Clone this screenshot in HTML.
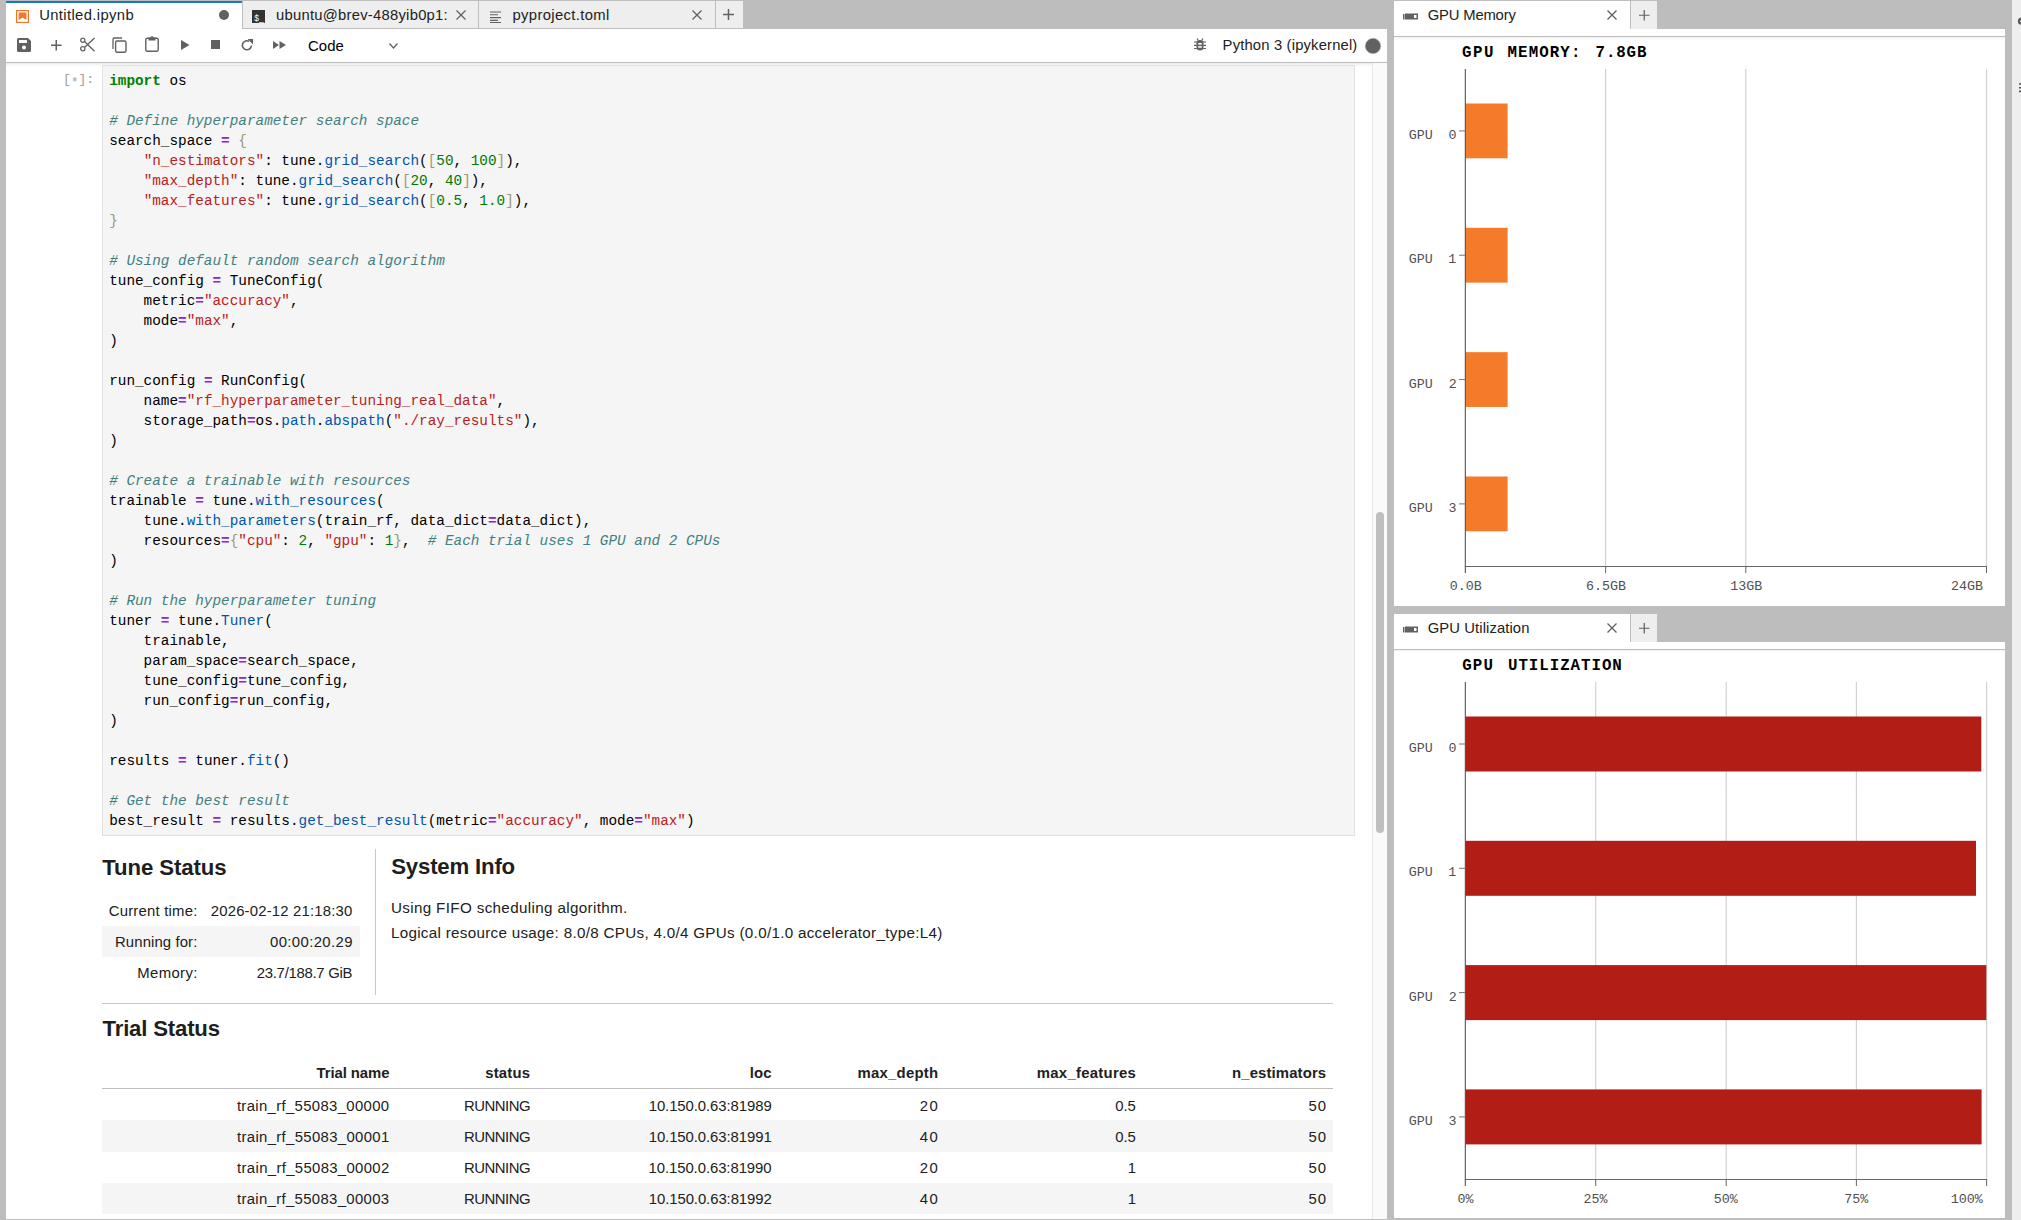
<!DOCTYPE html><html><head><meta charset="utf-8"><style>
*{margin:0;padding:0;box-sizing:border-box}
html,body{width:2021px;height:1220px;overflow:hidden;background:#bdbdbd;font-family:"Liberation Sans",sans-serif;color:#212121}
.a{position:absolute}
.t{position:absolute;white-space:pre;line-height:1}
.code{position:absolute;font-family:"Liberation Mono",monospace;font-size:14.35px;line-height:20px;white-space:pre;color:#000}
.kw{color:#008000;font-weight:bold}
.cm{color:#408080;font-style:italic}
.st{color:#ba2121}
.op{color:#8a22e0;font-weight:bold}
.br{color:#999977}
.nu{color:#007a00}
.pr{color:#0055aa}
svg{position:absolute;overflow:visible}
</style></head><body><div class="a" style="left:6px;top:29px;width:1381px;height:1190px;background:#fff;"></div><div class="a" style="left:6px;top:62px;width:1381px;height:1px;background:#bdbdbd;"></div><div class="a" style="left:6px;top:63px;width:1366px;height:4px;background:linear-gradient(rgba(0,0,0,0.07),rgba(0,0,0,0));"></div><div class="a" style="left:6px;top:1px;width:236px;height:28px;background:#fff;"></div><div class="a" style="left:6px;top:1px;width:236px;height:2px;background:#1976d2;"></div><svg style="left:16px;top:10px" width="13" height="13" viewBox="0 0 13 13"><rect x="0.6" y="0.6" width="11.8" height="11.8" fill="#fff" stroke="#f37726" stroke-width="1.2"/><path d="M2.6 2.6h7.8v7.4l-3.9-2.6-3.9 2.6z" fill="#f37726"/></svg><div class="t" style="left:39.19px;top:7.77px;font-family:'Liberation Sans',sans-serif;font-size:14.80px;color:#212121;letter-spacing:0.370px;">Untitled.ipynb</div><svg style="left:219px;top:9.6px" width="10" height="10"><circle cx="5" cy="5" r="5" fill="#616161"/></svg><div class="a" style="left:242px;top:1px;width:237px;height:28px;background:#eeeeee;border-left:1px solid #bdbdbd;border-bottom:1px solid #bdbdbd"></div><svg style="left:252px;top:10px" width="13" height="13" viewBox="0 0 13 13"><rect width="13" height="13" fill="#333"/><text x="2.2" y="10.5" font-family="Liberation Sans" font-size="8.5" fill="#fff">$_</text></svg><div class="t" style="left:275.94px;top:7.97px;font-family:'Liberation Sans',sans-serif;font-size:14.80px;color:#212121;letter-spacing:0.256px;">ubuntu@brev-488yib0p1:</div><svg style="left:456.0px;top:9.8px" width="10" height="10" viewBox="0 0 10 10"><path d="M0.5 0.5L9.5 9.5M9.5 0.5L0.5 9.5" stroke="#616161" stroke-width="1.3" fill="none"/></svg><div class="a" style="left:478px;top:1px;width:237px;height:28px;background:#eeeeee;border-left:1px solid #bdbdbd;border-bottom:1px solid #bdbdbd"></div><svg style="left:489px;top:10px" width="13" height="13" viewBox="0 0 13 13"><path d="M1 2h11M1 4.8h8M1 7.6h11M1 10.4h8M1 12.5h11" stroke="#616161" stroke-width="1.1"/></svg><div class="t" style="left:512.54px;top:7.97px;font-family:'Liberation Sans',sans-serif;font-size:14.80px;color:#212121;letter-spacing:0.353px;">pyproject.toml</div><svg style="left:692.0px;top:9.8px" width="10" height="10" viewBox="0 0 10 10"><path d="M0.5 0.5L9.5 9.5M9.5 0.5L0.5 9.5" stroke="#616161" stroke-width="1.3" fill="none"/></svg><div class="a" style="left:715px;top:1px;width:28px;height:28px;background:#eeeeee;border-left:1px solid #bdbdbd;border-bottom:1px solid #bdbdbd"></div><svg style="left:723.4px;top:9.3px" width="11" height="11" viewBox="0 0 11 11"><path d="M5.5 0V11M0 5.5H11" stroke="#616161" stroke-width="1.5" fill="none"/></svg><svg style="left:17px;top:38px" width="14" height="14" viewBox="0 0 14 14"><path d="M1.5 0h9.5l3 3v9.5a1.5 1.5 0 0 1-1.5 1.5h-11A1.5 1.5 0 0 1 0 12.5v-11A1.5 1.5 0 0 1 1.5 0z" fill="#616161"/><rect x="2" y="2" width="8" height="3" fill="#fff"/><circle cx="7" cy="9.5" r="2" fill="#fff"/></svg><svg style="left:50.5px;top:39.6px" width="10.5" height="10.5" viewBox="0 0 11 11"><path d="M5.5 0V11M0 5.5H11" stroke="#616161" stroke-width="1.6" fill="none"/></svg><svg style="left:80px;top:37px" width="15" height="15" viewBox="0 0 15 15"><circle cx="2.8" cy="3.2" r="2.1" fill="none" stroke="#616161" stroke-width="1.3"/><circle cx="2.8" cy="11.8" r="2.1" fill="none" stroke="#616161" stroke-width="1.3"/><path d="M4.5 4.5L14.5 14.2M4.5 10.5L14.5 1" stroke="#616161" stroke-width="1.3"/></svg><svg style="left:112px;top:37px" width="15" height="16" viewBox="0 0 15 16"><path d="M1 12V2.2A1.2 1.2 0 0 1 2.2 1H10" fill="none" stroke="#616161" stroke-width="1.3"/><rect x="3.6" y="4" width="10.4" height="11.2" rx="1.4" fill="none" stroke="#616161" stroke-width="1.4"/></svg><svg style="left:145px;top:36px" width="14" height="16" viewBox="0 0 14 16"><rect x="0.8" y="2.2" width="12.4" height="13" rx="1.4" fill="none" stroke="#616161" stroke-width="1.4"/><path d="M3.5 1.5h7v3h-7z" fill="#616161"/><circle cx="7" cy="1.5" r="1.3" fill="#616161"/></svg><svg style="left:181px;top:40px" width="9" height="10" viewBox="0 0 9 10"><path d="M0 0L8.5 5L0 10z" fill="#616161"/></svg><div class="a" style="left:211px;top:40px;width:9px;height:9px;background:#616161;"></div><svg style="left:241px;top:39px" width="12" height="12" viewBox="0 0 12 12"><path d="M10.4 6.4A4.5 4.5 0 1 1 8.2 2.4" fill="none" stroke="#616161" stroke-width="1.6"/><path d="M6.6 0L12 0L12 5.4z" fill="#616161"/></svg><svg style="left:272.5px;top:41px" width="13" height="8" viewBox="0 0 13 8"><path d="M0 0L6 4L0 8zM6.5 0L13 4L6.5 8z" fill="#616161"/></svg><div class="t" style="left:308.06px;top:38.59px;font-family:'Liberation Sans',sans-serif;font-size:14.90px;color:#000;letter-spacing:0.068px;">Code</div><svg style="left:389px;top:42.5px" width="9" height="6" viewBox="0 0 9 6"><path d="M0.5 0.5L4.5 5L8.5 0.5" fill="none" stroke="#616161" stroke-width="1.3"/></svg><svg style="left:1194px;top:38px" width="12" height="13" viewBox="0 0 12 13"><path d="M3 0.5L4.2 2.5M9 0.5L7.8 2.5" stroke="#616161" stroke-width="1.3"/><path d="M2.5 4.5a3.5 2.5 0 0 1 7 0V9a3.5 3.5 0 0 1-7 0z" fill="#616161"/><path d="M0 4h12M0 7.3h12M0 10.5h12" stroke="#616161" stroke-width="1.2"/><rect x="4.2" y="5" width="3.6" height="1.6" fill="#fff"/><rect x="4.2" y="8.1" width="3.6" height="1.6" fill="#fff"/></svg><div class="t" style="left:1222.62px;top:38.37px;font-family:'Liberation Sans',sans-serif;font-size:14.80px;color:#212121;letter-spacing:0.163px;">Python 3 (ipykernel)</div><svg style="left:1365px;top:37.8px" width="16" height="16"><circle cx="8" cy="8" r="7.6" fill="#616161" stroke="#888" stroke-width="0.8" stroke-dasharray="1.2 0.8"/></svg><div class="a" style="left:102px;top:65px;width:1253px;height:771px;background:#f5f5f5;border:1px solid #e0e0e0"></div><div class="t" style="left:62.90px;top:73.44px;font-family:'Liberation Mono',monospace;font-size:13px;color:#9e9e9e">[<span style="position:relative;top:2.6px">*</span>]:</div><div class="code" style="left:109.2px;top:70.5px"><span class="kw">import</span> os

<span class="cm"># Define hyperparameter search space</span>
search_space <span class="op">=</span> <span class="br">{</span>
    <span class="st">&quot;n_estimators&quot;</span>: tune.<span class="pr">grid_search</span>(<span class="br">[</span><span class="nu">50</span>, <span class="nu">100</span><span class="br">]</span>),
    <span class="st">&quot;max_depth&quot;</span>: tune.<span class="pr">grid_search</span>(<span class="br">[</span><span class="nu">20</span>, <span class="nu">40</span><span class="br">]</span>),
    <span class="st">&quot;max_features&quot;</span>: tune.<span class="pr">grid_search</span>(<span class="br">[</span><span class="nu">0.5</span>, <span class="nu">1.0</span><span class="br">]</span>),
<span class="br">}</span>

<span class="cm"># Using default random search algorithm</span>
tune_config <span class="op">=</span> TuneConfig(
    metric<span class="op">=</span><span class="st">&quot;accuracy&quot;</span>,
    mode<span class="op">=</span><span class="st">&quot;max&quot;</span>,
)

run_config <span class="op">=</span> RunConfig(
    name<span class="op">=</span><span class="st">&quot;rf_hyperparameter_tuning_real_data&quot;</span>,
    storage_path<span class="op">=</span>os.<span class="pr">path</span>.<span class="pr">abspath</span>(<span class="st">&quot;./ray_results&quot;</span>),
)

<span class="cm"># Create a trainable with resources</span>
trainable <span class="op">=</span> tune.<span class="pr">with_resources</span>(
    tune.<span class="pr">with_parameters</span>(train_rf, data_dict<span class="op">=</span>data_dict),
    resources<span class="op">=</span><span class="br">{</span><span class="st">&quot;cpu&quot;</span>: <span class="nu">2</span>, <span class="st">&quot;gpu&quot;</span>: <span class="nu">1</span><span class="br">}</span>,  <span class="cm"># Each trial uses 1 GPU and 2 CPUs</span>
)

<span class="cm"># Run the hyperparameter tuning</span>
tuner <span class="op">=</span> tune.<span class="pr">Tuner</span>(
    trainable,
    param_space<span class="op">=</span>search_space,
    tune_config<span class="op">=</span>tune_config,
    run_config<span class="op">=</span>run_config,
)

results <span class="op">=</span> tuner.<span class="pr">fit</span>()

<span class="cm"># Get the best result</span>
best_result <span class="op">=</span> results.<span class="pr">get_best_result</span>(metric<span class="op">=</span><span class="st">&quot;accuracy&quot;</span>, mode<span class="op">=</span><span class="st">&quot;max&quot;</span>)</div><div class="a" style="left:1372px;top:63px;width:15px;height:1156px;background:#fafafa;border-left:1px solid #e8e8e8"></div><div class="a" style="left:1376px;top:512px;width:8px;height:321px;background:#bfbfbf;border-radius:4px"></div><div class="t" style="left:102.18px;top:856.61px;font-family:'Liberation Sans',sans-serif;font-size:22.20px;color:#1e1e1e;font-weight:700;letter-spacing:-0.082px;">Tune Status</div><div class="a" style="left:375px;top:849px;width:1px;height:146px;background:#c8c8c8;"></div><div class="a" style="left:102px;top:926px;width:258px;height:31px;background:#f5f5f5;"></div><div class="t" style="left:108.66px;top:904.39px;font-family:'Liberation Sans',sans-serif;font-size:14.90px;color:#212121;letter-spacing:0.220px;">Current time:</div><div class="t" style="left:210.75px;top:904.39px;font-family:'Liberation Sans',sans-serif;font-size:14.90px;color:#212121;letter-spacing:0.179px;">2026-02-12 21:18:30</div><div class="t" style="left:115.01px;top:935.09px;font-family:'Liberation Sans',sans-serif;font-size:14.90px;color:#212121;letter-spacing:0.109px;">Running for:</div><div class="t" style="left:270.00px;top:935.09px;font-family:'Liberation Sans',sans-serif;font-size:14.90px;color:#212121;letter-spacing:0.379px;">00:00:20.29</div><div class="t" style="left:137.31px;top:965.99px;font-family:'Liberation Sans',sans-serif;font-size:14.90px;color:#212121;letter-spacing:0.358px;">Memory:</div><div class="t" style="left:256.75px;top:965.99px;font-family:'Liberation Sans',sans-serif;font-size:14.90px;color:#212121;letter-spacing:-0.276px;">23.7/188.7 GiB</div><div class="t" style="left:391.23px;top:856.21px;font-family:'Liberation Sans',sans-serif;font-size:22.20px;color:#1e1e1e;font-weight:700;letter-spacing:-0.181px;">System Info</div><div class="t" style="left:390.96px;top:900.43px;font-family:'Liberation Sans',sans-serif;font-size:15.20px;color:#212121;letter-spacing:0.352px;">Using FIFO scheduling algorithm.</div><div class="t" style="left:390.88px;top:924.63px;font-family:'Liberation Sans',sans-serif;font-size:15.20px;color:#212121;letter-spacing:0.305px;">Logical resource usage: 8.0/8 CPUs, 4.0/4 GPUs (0.0/1.0 accelerator_type:L4)</div><div class="a" style="left:102px;top:1003px;width:1231px;height:1px;background:#c8c8c8;"></div><div class="t" style="left:102.58px;top:1018.01px;font-family:'Liberation Sans',sans-serif;font-size:22.20px;color:#1e1e1e;font-weight:700;letter-spacing:-0.195px;">Trial Status</div><div class="t" style="left:316.45px;top:1065.59px;font-family:'Liberation Sans',sans-serif;font-size:14.90px;color:#212121;font-weight:700;letter-spacing:-0.065px;">Trial name</div><div class="t" style="left:485.18px;top:1065.59px;font-family:'Liberation Sans',sans-serif;font-size:14.90px;color:#212121;font-weight:700;letter-spacing:0.207px;">status</div><div class="t" style="left:749.76px;top:1065.59px;font-family:'Liberation Sans',sans-serif;font-size:14.90px;color:#212121;font-weight:700;letter-spacing:0.130px;">loc</div><div class="t" style="left:857.53px;top:1065.59px;font-family:'Liberation Sans',sans-serif;font-size:14.90px;color:#212121;font-weight:700;letter-spacing:0.249px;">max_depth</div><div class="t" style="left:1036.73px;top:1065.59px;font-family:'Liberation Sans',sans-serif;font-size:14.90px;color:#212121;font-weight:700;letter-spacing:0.285px;">max_features</div><div class="t" style="left:1232.03px;top:1065.59px;font-family:'Liberation Sans',sans-serif;font-size:14.90px;color:#212121;font-weight:700;letter-spacing:0.128px;">n_estimators</div><div class="a" style="left:102px;top:1088px;width:1231px;height:1px;background:#bdbdbd;"></div><div class="a" style="left:102px;top:1120px;width:1231px;height:32px;background:#f5f5f5;"></div><div class="a" style="left:102px;top:1183px;width:1231px;height:31px;background:#f5f5f5;"></div><div class="t" style="left:236.88px;top:1098.69px;font-family:'Liberation Sans',sans-serif;font-size:14.90px;color:#212121;letter-spacing:0.339px;">train_rf_55083_00000</div><div class="t" style="left:463.91px;top:1098.69px;font-family:'Liberation Sans',sans-serif;font-size:14.90px;color:#212121;letter-spacing:-0.479px;">RUNNING</div><div class="t" style="left:648.68px;top:1098.69px;font-family:'Liberation Sans',sans-serif;font-size:14.90px;color:#212121;letter-spacing:-0.074px;">10.150.0.63:81989</div><div class="t" style="left:919.86px;top:1098.69px;font-family:'Liberation Sans',sans-serif;font-size:14.90px;color:#212121;letter-spacing:1.427px;">20</div><div class="t" style="left:1115.20px;top:1098.69px;font-family:'Liberation Sans',sans-serif;font-size:14.90px;color:#212121;letter-spacing:-0.010px;">0.5</div><div class="t" style="left:1308.40px;top:1098.69px;font-family:'Liberation Sans',sans-serif;font-size:14.90px;color:#212121;letter-spacing:1.178px;">50</div><div class="t" style="left:237.03px;top:1129.99px;font-family:'Liberation Sans',sans-serif;font-size:14.90px;color:#212121;letter-spacing:0.339px;">train_rf_55083_00001</div><div class="t" style="left:463.91px;top:1129.99px;font-family:'Liberation Sans',sans-serif;font-size:14.90px;color:#212121;letter-spacing:-0.479px;">RUNNING</div><div class="t" style="left:648.68px;top:1129.99px;font-family:'Liberation Sans',sans-serif;font-size:14.90px;color:#212121;letter-spacing:-0.074px;">10.150.0.63:81991</div><div class="t" style="left:919.86px;top:1129.99px;font-family:'Liberation Sans',sans-serif;font-size:14.90px;color:#212121;letter-spacing:1.427px;">40</div><div class="t" style="left:1115.20px;top:1129.99px;font-family:'Liberation Sans',sans-serif;font-size:14.90px;color:#212121;letter-spacing:-0.010px;">0.5</div><div class="t" style="left:1308.40px;top:1129.99px;font-family:'Liberation Sans',sans-serif;font-size:14.90px;color:#212121;letter-spacing:1.178px;">50</div><div class="t" style="left:237.10px;top:1161.29px;font-family:'Liberation Sans',sans-serif;font-size:14.90px;color:#212121;letter-spacing:0.339px;">train_rf_55083_00002</div><div class="t" style="left:463.91px;top:1161.29px;font-family:'Liberation Sans',sans-serif;font-size:14.90px;color:#212121;letter-spacing:-0.479px;">RUNNING</div><div class="t" style="left:648.53px;top:1161.29px;font-family:'Liberation Sans',sans-serif;font-size:14.90px;color:#212121;letter-spacing:-0.074px;">10.150.0.63:81990</div><div class="t" style="left:919.86px;top:1161.29px;font-family:'Liberation Sans',sans-serif;font-size:14.90px;color:#212121;letter-spacing:1.427px;">20</div><div class="t" style="left:1127.70px;top:1161.29px;font-family:'Liberation Sans',sans-serif;font-size:14.90px;color:#212121;letter-spacing:-0.010px;">1</div><div class="t" style="left:1308.40px;top:1161.29px;font-family:'Liberation Sans',sans-serif;font-size:14.90px;color:#212121;letter-spacing:1.178px;">50</div><div class="t" style="left:236.95px;top:1192.39px;font-family:'Liberation Sans',sans-serif;font-size:14.90px;color:#212121;letter-spacing:0.339px;">train_rf_55083_00003</div><div class="t" style="left:463.91px;top:1192.39px;font-family:'Liberation Sans',sans-serif;font-size:14.90px;color:#212121;letter-spacing:-0.479px;">RUNNING</div><div class="t" style="left:648.76px;top:1192.39px;font-family:'Liberation Sans',sans-serif;font-size:14.90px;color:#212121;letter-spacing:-0.074px;">10.150.0.63:81992</div><div class="t" style="left:919.86px;top:1192.39px;font-family:'Liberation Sans',sans-serif;font-size:14.90px;color:#212121;letter-spacing:1.427px;">40</div><div class="t" style="left:1127.70px;top:1192.39px;font-family:'Liberation Sans',sans-serif;font-size:14.90px;color:#212121;letter-spacing:-0.010px;">1</div><div class="t" style="left:1308.40px;top:1192.39px;font-family:'Liberation Sans',sans-serif;font-size:14.90px;color:#212121;letter-spacing:1.178px;">50</div><div class="a" style="left:1394px;top:37px;width:611px;height:569px;background:#fff;"></div><div class="a" style="left:1394px;top:1px;width:236px;height:28px;background:#fff;"></div><div class="a" style="left:1630px;top:1px;width:27px;height:28px;background:#eeeeee;border-left:1px solid #bdbdbd"></div><div class="a" style="left:1394px;top:29px;width:611px;height:7px;background:#fff;"></div><div class="a" style="left:1394px;top:36px;width:611px;height:1px;background:#bdbdbd;"></div><div class="a" style="left:1394px;top:37px;width:611px;height:3px;background:linear-gradient(rgba(0,0,0,0.05),rgba(0,0,0,0));"></div><svg style="left:1403px;top:13.0px" width="15" height="7" viewBox="0 0 15 7"><rect x="0" y="1" width="1.5" height="5.5" fill="#616161"/><path d="M2 0.5h13v6h-13z" fill="#616161"/><rect x="11" y="2" width="2.5" height="3" fill="#fff"/></svg><div class="t" style="left:1427.76px;top:8.37px;font-family:'Liberation Sans',sans-serif;font-size:14.80px;color:#212121;letter-spacing:-0.175px;">GPU Memory</div><svg style="left:1606.8px;top:10.2px" width="10" height="10" viewBox="0 0 10 10"><path d="M0.5 0.5L9.5 9.5M9.5 0.5L0.5 9.5" stroke="#616161" stroke-width="1.3" fill="none"/></svg><svg style="left:1638.5px;top:9.9px" width="10.5" height="10.5" viewBox="0 0 11 11"><path d="M5.5 0V11M0 5.5H11" stroke="#616161" stroke-width="1.3" fill="none"/></svg><div class="a" style="left:1394px;top:650px;width:611px;height:568px;background:#fff;"></div><div class="a" style="left:1394px;top:614px;width:236px;height:28px;background:#fff;"></div><div class="a" style="left:1630px;top:614px;width:27px;height:28px;background:#eeeeee;border-left:1px solid #bdbdbd"></div><div class="a" style="left:1394px;top:642px;width:611px;height:7px;background:#fff;"></div><div class="a" style="left:1394px;top:649px;width:611px;height:1px;background:#bdbdbd;"></div><div class="a" style="left:1394px;top:650px;width:611px;height:3px;background:linear-gradient(rgba(0,0,0,0.05),rgba(0,0,0,0));"></div><svg style="left:1403px;top:626.0px" width="15" height="7" viewBox="0 0 15 7"><rect x="0" y="1" width="1.5" height="5.5" fill="#616161"/><path d="M2 0.5h13v6h-13z" fill="#616161"/><rect x="11" y="2" width="2.5" height="3" fill="#fff"/></svg><div class="t" style="left:1427.76px;top:621.37px;font-family:'Liberation Sans',sans-serif;font-size:14.80px;color:#212121;letter-spacing:0.097px;">GPU Utilization</div><svg style="left:1606.8px;top:623.2px" width="10" height="10" viewBox="0 0 10 10"><path d="M0.5 0.5L9.5 9.5M9.5 0.5L0.5 9.5" stroke="#616161" stroke-width="1.3" fill="none"/></svg><svg style="left:1638.5px;top:622.9px" width="10.5" height="10.5" viewBox="0 0 11 11"><path d="M5.5 0V11M0 5.5H11" stroke="#616161" stroke-width="1.3" fill="none"/></svg><div class="a" style="left:2012px;top:0px;width:9px;height:1220px;background:#eeeeee;"></div><svg style="left:2017px;top:16.5px" width="8" height="9"><circle cx="4.5" cy="4.2" r="3.6" fill="#5a5a5a"/><circle cx="4.5" cy="4.2" r="1.2" fill="#eee"/></svg><svg style="left:2019.3px;top:83px" width="3" height="10"><path d="M0 1h3M0 4.7h3M0 8.4h3" stroke="#555" stroke-width="1.6"/></svg><div class="t" style="left:1462.07px;top:45.90px;font-family:'Liberation Mono',monospace;font-size:15.80px;color:#000;font-weight:700;letter-spacing:1.520px;">GPU</div><div class="t" style="left:1507.51px;top:45.90px;font-family:'Liberation Mono',monospace;font-size:15.80px;color:#000;font-weight:700;letter-spacing:1.094px;">MEMORY:</div><div class="t" style="left:1595.57px;top:45.90px;font-family:'Liberation Mono',monospace;font-size:15.80px;color:#000;font-weight:700;letter-spacing:0.861px;">7.8GB</div><svg style="left:0;top:0" width="2021" height="1220"><rect x="1605.00" y="69.00" width="1.2" height="497.00" fill="#d2d2d2"/><rect x="1745.20" y="69.00" width="1.2" height="497.00" fill="#d2d2d2"/><rect x="1985.90" y="69.00" width="1.2" height="497.00" fill="#d2d2d2"/><rect x="1465.5" y="103.50" width="42.10" height="54.80" fill="#f47b2a"/><rect x="1465.5" y="227.83" width="42.10" height="54.80" fill="#f47b2a"/><rect x="1465.5" y="352.16" width="42.10" height="54.80" fill="#f47b2a"/><rect x="1465.5" y="476.49" width="42.10" height="54.80" fill="#f47b2a"/><rect x="1464.8" y="69.00" width="1" height="504.00" fill="#444"/><rect x="1464.8" y="566.00" width="522.20" height="1" fill="#666"/><rect x="1465.00" y="566.00" width="1" height="7" fill="#666"/><rect x="1605.10" y="566.00" width="1" height="7" fill="#666"/><rect x="1745.30" y="566.00" width="1" height="7" fill="#666"/><rect x="1986.00" y="566.00" width="1" height="7" fill="#666"/><rect x="1459" y="130.40" width="6" height="1" fill="#777"/><rect x="1459" y="254.73" width="6" height="1" fill="#777"/><rect x="1459" y="379.06" width="6" height="1" fill="#777"/><rect x="1459" y="503.39" width="6" height="1" fill="#777"/></svg><div class="t" style="left:1408.77px;top:128.89px;font-family:'Liberation Mono',monospace;font-size:13.33px;color:#505050;">GPU</div><div class="t" style="left:1448.50px;top:128.89px;font-family:'Liberation Mono',monospace;font-size:13.33px;color:#505050;">0</div><div class="t" style="left:1408.77px;top:253.22px;font-family:'Liberation Mono',monospace;font-size:13.33px;color:#505050;">GPU</div><div class="t" style="left:1448.30px;top:253.22px;font-family:'Liberation Mono',monospace;font-size:13.33px;color:#505050;">1</div><div class="t" style="left:1408.77px;top:377.55px;font-family:'Liberation Mono',monospace;font-size:13.33px;color:#505050;">GPU</div><div class="t" style="left:1448.64px;top:377.55px;font-family:'Liberation Mono',monospace;font-size:13.33px;color:#505050;">2</div><div class="t" style="left:1408.77px;top:501.88px;font-family:'Liberation Mono',monospace;font-size:13.33px;color:#505050;">GPU</div><div class="t" style="left:1448.57px;top:501.88px;font-family:'Liberation Mono',monospace;font-size:13.33px;color:#505050;">3</div><div class="t" style="left:1449.70px;top:579.99px;font-family:'Liberation Mono',monospace;font-size:13.33px;color:#505050;">0.0B</div><div class="t" style="left:1586.00px;top:579.99px;font-family:'Liberation Mono',monospace;font-size:13.33px;color:#505050;">6.5GB</div><div class="t" style="left:1730.20px;top:579.99px;font-family:'Liberation Mono',monospace;font-size:13.33px;color:#505050;">13GB</div><div class="t" style="left:1951.00px;top:579.99px;font-family:'Liberation Mono',monospace;font-size:13.33px;color:#505050;">24GB</div><div class="t" style="left:1462.27px;top:659.20px;font-family:'Liberation Mono',monospace;font-size:15.80px;color:#000;font-weight:700;letter-spacing:1.120px;">GPU</div><div class="t" style="left:1507.95px;top:659.20px;font-family:'Liberation Mono',monospace;font-size:15.80px;color:#000;font-weight:700;letter-spacing:0.959px;">UTILIZATION</div><svg style="left:0;top:0" width="2021" height="1220"><rect x="1595.10" y="682.00" width="1.2" height="497.00" fill="#d2d2d2"/><rect x="1725.60" y="682.00" width="1.2" height="497.00" fill="#d2d2d2"/><rect x="1855.80" y="682.00" width="1.2" height="497.00" fill="#d2d2d2"/><rect x="1986.00" y="682.00" width="1.2" height="497.00" fill="#d2d2d2"/><rect x="1465.5" y="716.50" width="515.80" height="55.00" fill="#b21e16"/><rect x="1465.5" y="840.80" width="510.50" height="55.00" fill="#b21e16"/><rect x="1465.5" y="965.10" width="520.80" height="55.00" fill="#b21e16"/><rect x="1465.5" y="1089.40" width="516.10" height="55.00" fill="#b21e16"/><rect x="1464.8" y="682.00" width="1" height="504.00" fill="#444"/><rect x="1464.8" y="1179.00" width="522.30" height="1" fill="#666"/><rect x="1465.00" y="1179.00" width="1" height="7" fill="#666"/><rect x="1595.20" y="1179.00" width="1" height="7" fill="#666"/><rect x="1725.70" y="1179.00" width="1" height="7" fill="#666"/><rect x="1855.90" y="1179.00" width="1" height="7" fill="#666"/><rect x="1986.10" y="1179.00" width="1" height="7" fill="#666"/><rect x="1459" y="743.50" width="6" height="1" fill="#777"/><rect x="1459" y="867.80" width="6" height="1" fill="#777"/><rect x="1459" y="992.10" width="6" height="1" fill="#777"/><rect x="1459" y="1116.40" width="6" height="1" fill="#777"/></svg><div class="t" style="left:1408.77px;top:741.99px;font-family:'Liberation Mono',monospace;font-size:13.33px;color:#505050;">GPU</div><div class="t" style="left:1448.50px;top:741.99px;font-family:'Liberation Mono',monospace;font-size:13.33px;color:#505050;">0</div><div class="t" style="left:1408.77px;top:866.29px;font-family:'Liberation Mono',monospace;font-size:13.33px;color:#505050;">GPU</div><div class="t" style="left:1448.30px;top:866.29px;font-family:'Liberation Mono',monospace;font-size:13.33px;color:#505050;">1</div><div class="t" style="left:1408.77px;top:990.59px;font-family:'Liberation Mono',monospace;font-size:13.33px;color:#505050;">GPU</div><div class="t" style="left:1448.64px;top:990.59px;font-family:'Liberation Mono',monospace;font-size:13.33px;color:#505050;">2</div><div class="t" style="left:1408.77px;top:1114.89px;font-family:'Liberation Mono',monospace;font-size:13.33px;color:#505050;">GPU</div><div class="t" style="left:1448.57px;top:1114.89px;font-family:'Liberation Mono',monospace;font-size:13.33px;color:#505050;">3</div><div class="t" style="left:1457.40px;top:1193.09px;font-family:'Liberation Mono',monospace;font-size:13.33px;color:#505050;">0%</div><div class="t" style="left:1583.60px;top:1193.09px;font-family:'Liberation Mono',monospace;font-size:13.33px;color:#505050;">25%</div><div class="t" style="left:1713.80px;top:1193.09px;font-family:'Liberation Mono',monospace;font-size:13.33px;color:#505050;">50%</div><div class="t" style="left:1844.30px;top:1193.09px;font-family:'Liberation Mono',monospace;font-size:13.33px;color:#505050;">75%</div><div class="t" style="left:1950.80px;top:1193.09px;font-family:'Liberation Mono',monospace;font-size:13.33px;color:#505050;">100%</div></body></html>
